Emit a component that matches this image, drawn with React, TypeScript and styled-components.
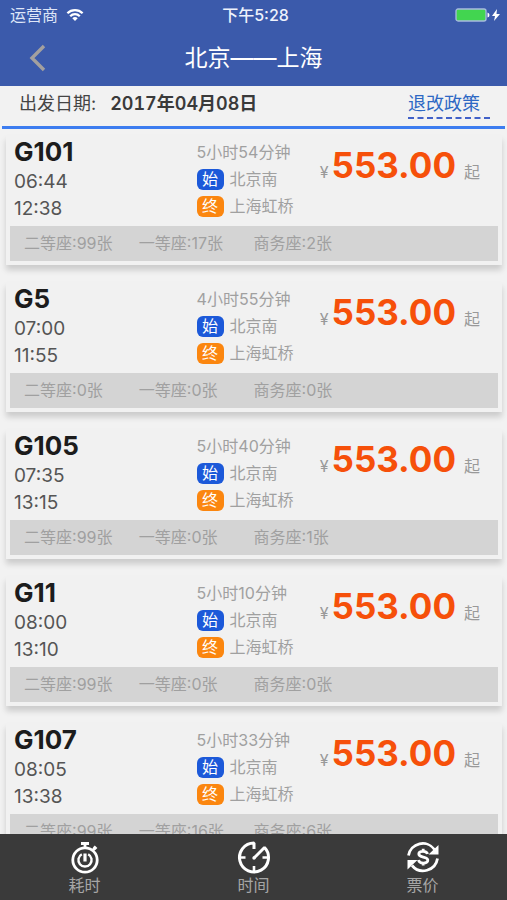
import React from 'react';
import styled, { createGlobalStyle } from 'styled-components';

const GlobalStyle = createGlobalStyle`
  *, *::before, *::after { box-sizing: border-box; }
  body {
    margin: 0;
    background: #f2f2f2;
    font-family: Inter, "Noto Sans CJK SC", sans-serif;
  }
  button { font-family: inherit; border: 0; padding: 0; background: none; cursor: pointer; }
  h1, h2, p { margin: 0; }
`;

const Screen = styled.div`
  display: flex;
  flex-direction: column;
  height: 100vh;
  overflow: hidden;
`;

const Header = styled.header`
  flex: none;
  background: #3b5aab;
  color: #fff;
`;

const StatusBar = styled.div`
  display: grid;
  grid-template-columns: 1fr auto 1fr;
  align-items: center;
  height: 30px;
  padding: 0 6px 0 10px;
  font-size: 16px;
  line-height: 30px;
`;

const Carrier = styled.div`
  display: flex;
  align-items: center;
  gap: 8px;
  color: #dfe6f8;
`;

const Clock = styled.time`
  font-weight: 500;
  color: #eef2fc;
`;

const Battery = styled.div`
  display: flex;
  justify-content: flex-end;
`;

const NavBar = styled.div`
  display: grid;
  grid-template-columns: 60px 1fr 60px;
  align-items: center;
  height: 56px;
`;

const BackButton = styled.button`
  display: flex;
  padding-left: 28px;
`;

const Title = styled.h1`
  font-size: 23px;
  line-height: 32px;
  font-weight: 400;
  text-align: center;
`;

const DateBar = styled.section`
  flex: none;
  display: flex;
  align-items: flex-start;
  height: 43px;
  margin: 0 2px;
  padding: 5px 15px 0 17px;
  border-bottom: 3px solid #3d7df0;
  font-size: 18px;
  line-height: 26px;
  color: #444;
`;

const TravelDate = styled.strong`
  margin-left: 14px;
  font-weight: 600;
  font-variant-numeric: tabular-nums;
  color: #3a3a3a;
`;

const PolicyLink = styled.a`
  margin-left: auto;
  padding-right: 10px;
  border-bottom: 2px dashed #4161c8;
  color: #2e68c4;
  text-decoration: none;
`;

const TrainList = styled.main`
  flex: 1;
  min-height: 0;
  overflow-y: auto;
  scrollbar-width: none;
  display: flex;
  flex-direction: column;
  gap: 17px;
  padding: 6px 5px 17px 6px;
`;

const Card = styled.article`
  flex: none;
  height: 130px;
  padding: 0 4px 4px;
  display: flex;
  flex-direction: column;
  justify-content: space-between;
  background: #f1f1f1;
  box-shadow: 0 5px 6px rgba(0, 0, 0, 0.16);
`;

const Summary = styled.div`
  display: grid;
  grid-template-columns: 187fr 118fr 184fr;
  height: 86px;
`;

const Times = styled.div`
  padding-left: 4px;
  font-size: 19px;
  line-height: 27px;
  color: #555;
`;

const TrainNumber = styled.h2`
  font-size: 26px;
  line-height: 33px;
  font-weight: 700;
  color: #1c1c1c;
`;

const Route = styled.div`
  padding-top: 4px;
  font-size: 16px;
  line-height: 27px;
  color: #a0a0a0;
  white-space: nowrap;
`;

const Stop = styled.p`
  display: flex;
  align-items: center;
  gap: 6px;
`;

const Tag = styled.span<{ $color: string }>`
  width: 27px;
  height: 21px;
  border-radius: 6px;
  background: ${(p) => p.$color};
  color: #fff;
  line-height: 20px;
  text-align: center;
`;

const Price = styled.p`
  display: flex;
  align-items: baseline;
  justify-content: flex-end;
  gap: 8px;
  padding-right: 18px;
  font-size: 16px;
  line-height: 60px;
  color: #999;
  white-space: nowrap;
`;

const Amount = styled.strong`
  margin-left: -5px;
  font-size: 35px;
  font-weight: 700;
  color: #f6500a;
`;

const Seats = styled.div`
  display: grid;
  grid-template-columns: 115fr 115fr 245fr;
  height: 35px;
  padding-left: 14px;
  background: #d4d4d4;
  font-size: 16px;
  line-height: 34px;
  color: #a0a0a0;
  white-space: nowrap;
`;

const TabBar = styled.nav`
  flex: none;
  display: grid;
  grid-template-columns: repeat(3, 1fr);
  height: 66px;
  background: #3a3a3a;
`;

const Tab = styled.button`
  display: flex;
  flex-direction: column;
  align-items: center;
  padding-top: 6px;
  font-size: 16px;
  line-height: 23px;
  color: #a6a6a6;
`;

const WifiIcon = () => (
  <svg width="18" height="14" viewBox="0 0 18 14" fill="none" stroke="#fff" strokeWidth="2.3" aria-hidden="true">
    <path d="M1.4 5.2a10.8 10.8 0 0 1 15.2 0M4.2 8.2a6.8 6.8 0 0 1 9.6 0" />
    <path d="M9 13 6.3 10.3a3.8 3.8 0 0 1 5.4 0Z" fill="#fff" stroke="none" />
  </svg>
);

const BatteryIcon = () => (
  <svg width="46" height="14" viewBox="0 0 46 14" aria-hidden="true">
    <rect x="1" y="1" width="30" height="12" rx="2" fill="#42d550" stroke="#a9bbdf" strokeWidth="1.3" />
    <path d="M32.5 4.5q2 .5 2 2.5t-2 2.5Z" fill="#fff" />
    <path d="m42 1-5 7h3l-1 5 6-7h-3.500Z" fill="#fff" />
  </svg>
);

const BackIcon = () => (
  <svg width="19" height="28" viewBox="0 0 19 28" fill="none" stroke="#a3a09f" strokeWidth="3.4" aria-hidden="true">
    <path d="M16 2 4 14l12 12" />
  </svg>
);

const StopwatchIcon = () => (
  <svg width="34" height="34" viewBox="0 0 34 34" fill="none" stroke="#fff" aria-hidden="true">
    <circle cx="17" cy="20" r="12.200" strokeWidth="2.800" />
    <path d="M13 3.500h8M17 3.500v5M24 11l3.500-3.500M25.800 6.500l2.600 2.600" strokeWidth="2.800" />
    <path d="M13.800 14.200a6.600 6.600 0 1 0 6.400 0" strokeWidth="2.400" />
    <path d="M17 13.500v8" strokeWidth="3.200" />
  </svg>
);

const ClockIcon = () => (
  <svg width="34" height="34" viewBox="0 0 34 34" fill="none" stroke="#fff" aria-hidden="true">
    <path d="M17 9V3A14.500 14.500 0 1 0 27.500 7.500L17 18" strokeWidth="3" strokeLinejoin="bevel" />
    <path d="M2.500 17.500h6M25.500 17.500h6M17 26v6" strokeWidth="2.600" />
    <circle cx="17" cy="18" r="1.700" fill="#fff" stroke="none" />
  </svg>
);

const FareIcon = () => (
  <svg width="34" height="34" viewBox="0 0 34 34" fill="none" stroke="#fff" aria-hidden="true">
    <path d="M2.500 15.500A14.500 14.500 0 0 1 28.500 9.500M31.500 18.500A14.500 14.500 0 0 1 6 25.500" strokeWidth="2.800" />
    <path d="M32.500 5v9.500H22.500ZM1.500 29.500V20h10Z" fill="#fff" stroke="none" />
    <path d="M21.500 14c-.4-2-2-2.700-4.400-2.700-2.600 0-4.300 1-4.300 2.800 0 4.200 9 1.700 9 6 0 1.900-1.900 3-4.600 3-2.500 0-4.300-.9-4.700-3M17.200 8.800v2.500M17.200 23v2.600" strokeWidth="2.800" />
  </svg>
);

interface Train {
  id: string;
  depart: string;
  arrive: string;
  duration: string;
  seats: [number, number, number];
}

const trains: Train[] = [
  { id: 'G101', depart: '06:44', arrive: '12:38', duration: '5小时54分钟', seats: [99, 17, 2] },
  { id: 'G5', depart: '07:00', arrive: '11:55', duration: '4小时55分钟', seats: [0, 0, 0] },
  { id: 'G105', depart: '07:35', arrive: '13:15', duration: '5小时40分钟', seats: [99, 0, 1] },
  { id: 'G11', depart: '08:00', arrive: '13:10', duration: '5小时10分钟', seats: [99, 0, 0] },
  { id: 'G107', depart: '08:05', arrive: '13:38', duration: '5小时33分钟', seats: [99, 16, 6] },
];

const TrainCard = ({ train }: { train: Train }) => (
  <Card>
    <Summary>
      <Times>
        <TrainNumber>{train.id}</TrainNumber>
        <p>{train.depart}</p>
        <p>{train.arrive}</p>
      </Times>
      <Route>
        <p>{train.duration}</p>
        <Stop><Tag $color="#1c59d9">始</Tag>北京南</Stop>
        <Stop><Tag $color="#fb860f">终</Tag>上海虹桥</Stop>
      </Route>
      <Price>
        <span>¥</span>
        <Amount>553.00</Amount>
        <span>起</span>
      </Price>
    </Summary>
    <Seats>
      <span>二等座:{train.seats[0]}张</span>
      <span>一等座:{train.seats[1]}张</span>
      <span>商务座:{train.seats[2]}张</span>
    </Seats>
  </Card>
);

export default function App() {
  return (
    <>
      <GlobalStyle />
      <Screen>
        <Header>
          <StatusBar>
            <Carrier>运营商<WifiIcon /></Carrier>
            <Clock>下午5:28</Clock>
            <Battery><BatteryIcon /></Battery>
          </StatusBar>
          <NavBar>
            <BackButton type="button" aria-label="返回"><BackIcon /></BackButton>
            <Title>北京——上海</Title>
          </NavBar>
        </Header>
        <DateBar>
          <span>出发日期:</span>
          <TravelDate>2017年04月08日</TravelDate>
          <PolicyLink href="#policy">退改政策</PolicyLink>
        </DateBar>
        <TrainList>
          {trains.map((t) => <TrainCard key={t.id} train={t} />)}
        </TrainList>
        <TabBar>
          <Tab type="button"><StopwatchIcon />耗时</Tab>
          <Tab type="button"><ClockIcon />时间</Tab>
          <Tab type="button"><FareIcon />票价</Tab>
        </TabBar>
      </Screen>
    </>
  );
}
